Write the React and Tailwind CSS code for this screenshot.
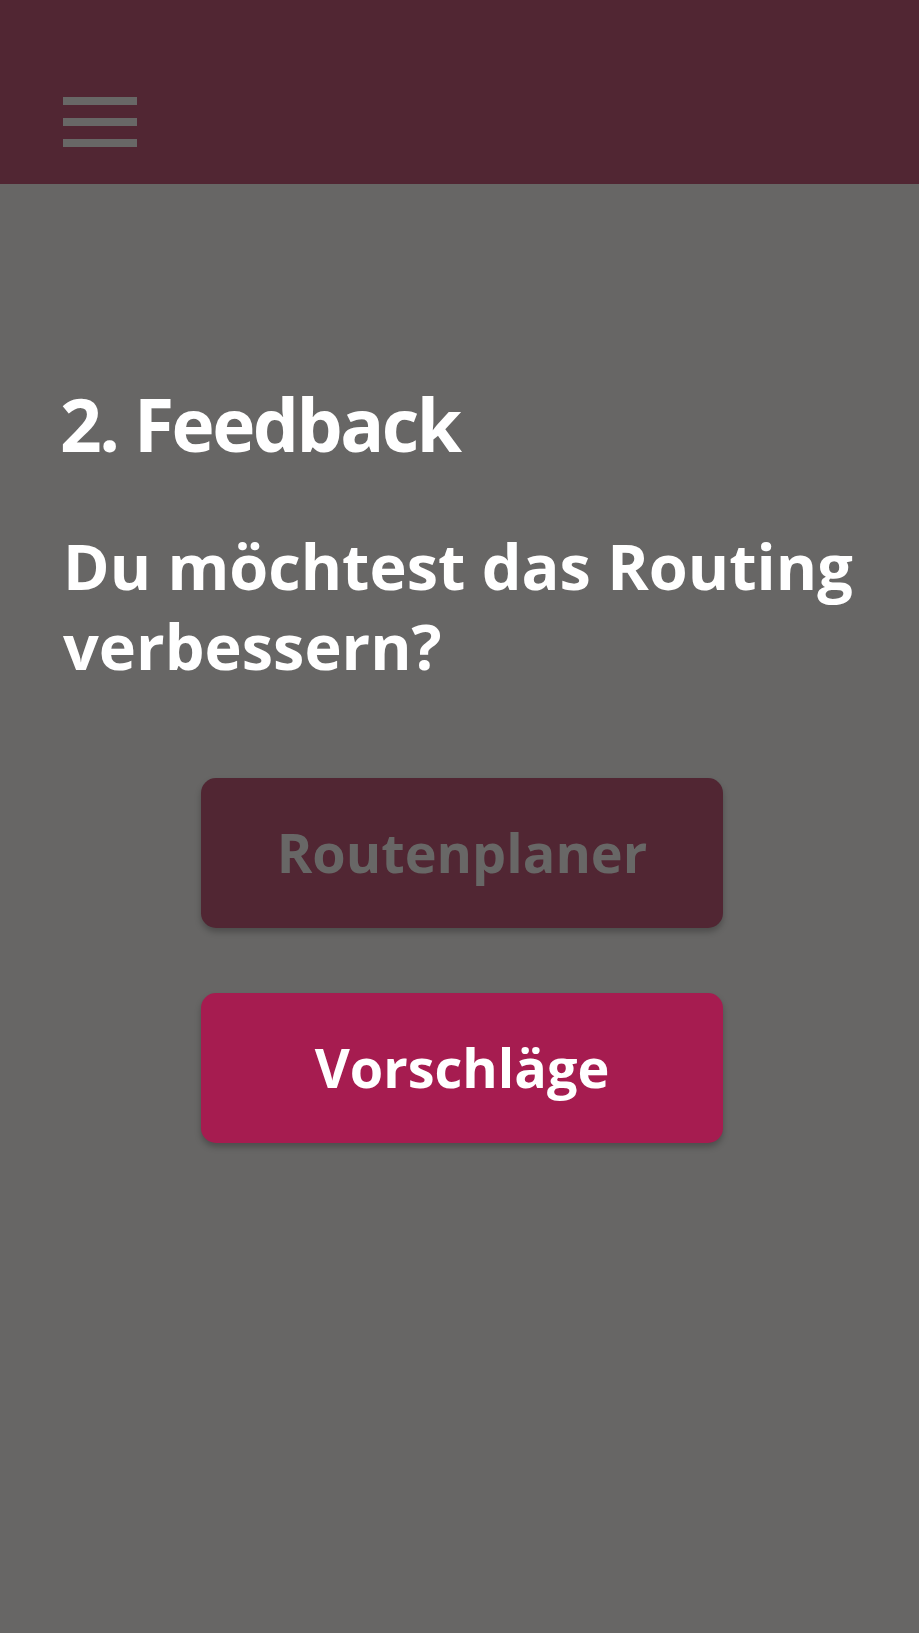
import React from 'react';

const font = { fontFamily: '"Open Sans", "Noto Sans", sans-serif' };

const Hamburger = () => (
    <button className="flex flex-col gap-[13px]" aria-label="Menü">
        <span className="block w-[74px] h-[8px] bg-[#686766]"></span>
        <span className="block w-[74px] h-[8px] bg-[#686766]"></span>
        <span className="block w-[74px] h-[8px] bg-[#686766]"></span>
    </button>
);

export default function App() {
    return (
        <div className="min-h-[1633px] w-full bg-[#676665] flex flex-col" style={font}>
            <header className="h-[184px] bg-[#512633] flex items-start pl-[63px] pt-[97px]">
                <Hamburger />
            </header>

            <main className="flex flex-col pt-[196px]">
                <div className="pl-[60px] pr-[12px]">
                    <h1 className="text-[73px] leading-[1.2] font-bold text-white tracking-[-2.5px]">2. Feedback</h1>
                    <h2 className="mt-[58px] pl-[3px] text-[63px] leading-[80px] font-bold text-white">
                        Du möchtest das Routing verbessern?
                    </h2>
                </div>

                <div className="mt-[92px] flex flex-col items-center gap-[65px] pl-[5px]">
                    <button className="w-[522px] h-[150px] rounded-[15px] bg-[#512633] text-[#686766] text-[54px] font-bold shadow-[0_4px_6px_rgba(0,0,0,0.25)]">
                        Routenplaner
                    </button>
                    <button className="w-[522px] h-[150px] rounded-[15px] bg-[#a61c50] text-white text-[54px] font-bold shadow-[0_4px_6px_rgba(0,0,0,0.25)]">
                        Vorschläge
                    </button>
                </div>
            </main>
        </div>
    );
}
